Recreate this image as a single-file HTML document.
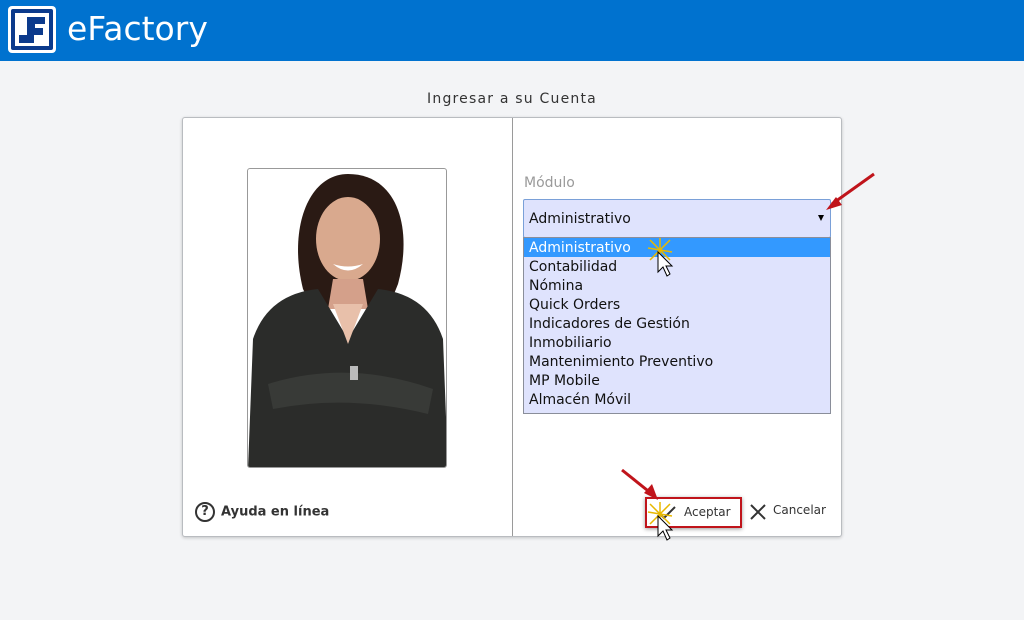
<!DOCTYPE html>
<html><head><meta charset="utf-8"><style>
*{margin:0;padding:0;box-sizing:border-box}
body{width:1024px;height:620px;background:#f3f4f6;font-family:"DejaVu Sans","Liberation Sans",sans-serif;position:relative;overflow:hidden}
.hdr{position:absolute;left:0;top:0;width:1024px;height:61px;background:#0072cf}
.logo{position:absolute;left:8px;top:6px;width:48px;height:47px;background:#fff;border-radius:4px}
.logo .in{position:absolute;left:3px;top:3px;width:42px;height:41px;background:#0b3a8c;border-radius:2px}
.logo .in2{position:absolute;left:4px;top:4px;width:34px;height:33px;background:#fff}
.brand{position:absolute;left:67px;top:9px;color:#fff;font-size:33px;font-family:"DejaVu Sans",sans-serif}
.title{position:absolute;left:0;width:1024px;top:91px;text-align:center;font-size:14px;color:#333;letter-spacing:1.2px}
.dlg{position:absolute;left:182px;top:117px;width:660px;height:420px;background:#fff;border:1px solid #b9bcc0;border-radius:3px;box-shadow:0 1px 3px rgba(0,0,0,.2)}
.div{position:absolute;left:329px;top:0;width:1px;height:418px;background:#9a9a9a}
.photo{position:absolute;left:64px;top:50px;width:200px;height:300px;border:1px solid #999;border-radius:3px;overflow:hidden;background:#fff}
.lbl{position:absolute;left:341px;top:57px;font-size:14px;color:#9a9a9a}
.sel{position:absolute;left:340px;top:81px;width:308px;height:39px;background:#dfe3fd;border:1px solid #7aa0d8;border-radius:2px;font-size:14px;color:#111;padding:11px 5px}
.arr{position:absolute;right:6px;top:15px;width:0;height:0;border-left:3.5px solid transparent;border-right:3.5px solid transparent;border-top:6px solid #000}
.list{position:absolute;left:340px;top:119px;width:308px;height:177px;background:#dfe3fd;border:1px solid #8a8e9a;font-size:14px;color:#111}
.list div{height:19px;line-height:20px;padding-left:5px}
.list .hl{background:#3399ff;color:#fff}
.help{position:absolute;left:12px;top:384px;font-size:13px;font-weight:bold;color:#333}
.help .q{display:inline-block;width:20px;height:20px;border:2px solid #333;border-radius:50%;text-align:center;line-height:16px;font-size:13px;margin-right:6px;vertical-align:middle}
.acc{position:absolute;left:462px;top:379px;width:97px;height:31px;border:2px solid #c0141b;box-shadow:0 1px 4px rgba(0,0,0,.4)}
.acc span{position:absolute;left:37px;top:6px;font-size:12px;color:#333}
.can{position:absolute;left:568px;top:385px;font-size:12px;color:#333}
</style></head><body>
<div class="hdr"><div class="logo"><div class="in"><div class="in2">
<svg width="34" height="33" viewBox="0 0 34 33"><path d="M12 4h18v7H20v4h8v7H19v8H4v-8h8z" fill="#0b3a8c"/></svg>
</div></div></div><div class="brand">eFactory</div></div>
<div class="title">Ingresar a su Cuenta</div>
<div class="dlg">
<div class="photo"><svg width="200" height="300" viewBox="0 0 200 300">
<path d="M55 120 C40 60 60 5 100 5 C150 5 165 60 150 115 L140 140 L65 140Z" fill="#2a1a14"/>
<ellipse cx="100" cy="70" rx="32" ry="42" fill="#d9a98e"/>
<path d="M85 95 Q100 108 115 95 Q100 100 85 95Z" fill="#fff"/>
<path d="M85 110 L115 110 L120 140 L80 140Z" fill="#d4a08a"/>
<path d="M0 300 L5 170 Q20 125 70 120 L100 170 L130 120 Q180 125 195 170 L200 300Z" fill="#2b2c2a"/>
<path d="M85 135 L100 175 L115 135Z" fill="#e8c0aa"/>
<path d="M20 215 Q100 190 185 220 L180 245 Q100 225 25 240Z" fill="#383a37"/>
<rect x="102" y="197" width="8" height="14" fill="#bbb"/>
</svg></div>
<div class="div"></div>
<div class="lbl">Módulo</div>
<div class="sel">Administrativo<div class="arr"></div></div>
<div class="list">
<div class="hl">Administrativo</div><div>Contabilidad</div><div>Nómina</div><div>Quick Orders</div><div>Indicadores de Gestión</div><div>Inmobiliario</div><div>Mantenimiento Preventivo</div><div>MP Mobile</div><div>Almacén Móvil</div>
</div>
<div class="help"><span class="q">?</span>Ayuda en línea</div>
<div class="acc"><svg style="position:absolute;left:10px;top:5px" width="20" height="18"><path d="M3 10 L7 14 L18 3" stroke="#333" stroke-width="2" fill="none"/></svg><span>Aceptar</span></div>
<div class="can"><svg style="position:absolute;left:-2px;top:0" width="18" height="18"><path d="M2 2L16 16M16 2L2 16" stroke="#333" stroke-width="2"/></svg><span style="margin-left:22px">Cancelar</span></div>
</div>
<svg style="position:absolute;left:0;top:0" width="1024" height="620">
<path d="M874 174 L832 204" stroke="#c0141b" stroke-width="3"/><path d="M826 210 L836 197 L842 205Z" fill="#c0141b"/>
<path d="M622 470 L652 494" stroke="#c0141b" stroke-width="3"/><path d="M658 500 L644 493 L652 484Z" fill="#c0141b"/>
<g stroke="#e8b800" stroke-width="1.5"><path d="M648 248L672 252M660 238L660 262M650 240L670 260M670 240L650 260"/><path d="M648 512L672 516M660 502L660 526M650 504L670 524M670 504L650 524"/></g>
<path d="M658 252 L658 272 L663 267 L667 276 L670 274 L666 266 L672 266Z" fill="#fff" stroke="#000"/>
<path d="M658 516 L658 536 L663 531 L667 540 L670 538 L666 530 L672 530Z" fill="#fff" stroke="#000"/>
</svg>
</body></html>
